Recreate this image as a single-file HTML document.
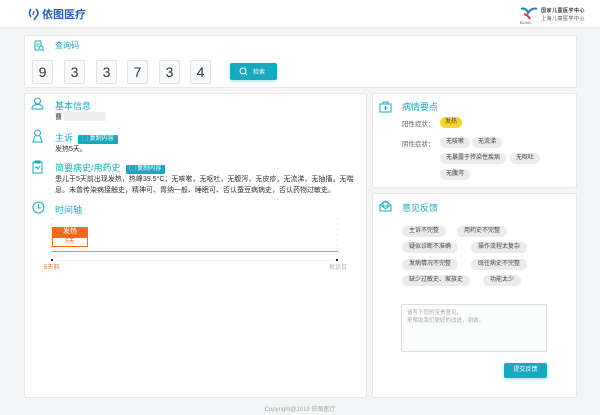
<!DOCTYPE html>
<html><head><meta charset="utf-8"><style>
*{margin:0;padding:0;box-sizing:border-box}
body{width:600px;height:415px;background:#f4f5f6;font-family:"Liberation Sans","Noto Sans CJK SC",sans-serif;position:relative;overflow:hidden;color:#333}
.a{position:absolute}
.card{position:absolute;background:#fff;border:1px solid #e6e8ea;border-radius:2px}
.t{color:#1aabbd;font-size:9px}
.s{font-size:7px;color:#333}
.tag{position:absolute;background:#e9ebed;border-radius:8px;font-size:6px;color:#444;height:11px;line-height:11px;padding:0 6px}
.d{position:absolute;top:60px;width:21px;height:24px;border:1px solid #e2e4e6;background:#f8f9fa;border-radius:2px;font-size:14px;line-height:23px;text-align:center;color:#333}
.cp{display:inline-block;background:#17a9bd;color:#fff;font-size:6px;height:9px;line-height:9px;padding:0 4px;border-radius:1px;vertical-align:1px;margin-left:5px}
svg{position:absolute}
</style></head><body>
<div class="a" style="left:0;top:0;width:600px;height:28px;background:#fff;border-bottom:1px solid #e8e8e8"></div>
<svg style="left:28px;top:7px" width="12" height="14" viewBox="0 0 12 14"><path d="M3 2 Q0 6 3 10 M8 2 Q12 6 8 10 L6 13" stroke="#2a5fb5" stroke-width="1.6" fill="none"/><path d="M6 4 L5 8" stroke="#2a5fb5" stroke-width="1.4"/></svg>
<div class="a" style="left:42px;top:6px;font-size:11px;color:#2a5fb5;font-weight:bold">依图医疗</div>
<svg style="left:518px;top:5px" width="22" height="20" viewBox="0 0 22 20"><path d="M3 4 Q8 2 10 8 Q14 2 19 4" stroke="#2a7ab8" stroke-width="2" fill="none"/><path d="M6 9 Q10 10 12 14" stroke="#e03060" stroke-width="2" fill="none"/><text x="2" y="19" font-size="4" fill="#2a5fb5">BCMC</text></svg>
<div class="a" style="left:541px;top:7px;font-size:5px;color:#333;font-weight:bold;letter-spacing:0.5px">国家儿童医学中心</div>
<div class="a" style="left:541px;top:15px;font-size:5px;color:#555;letter-spacing:0.5px">上海儿童医学中心</div>

<div class="card" style="left:24px;top:35px;width:553px;height:53px"></div>
<svg style="left:33px;top:40px" width="12" height="12" viewBox="0 0 12 12"><path d="M2 1h6v5M2 1v9h4M3.5 4h3M3.5 6h2" stroke="#1aabbd" fill="none"/><circle cx="8" cy="8" r="2" stroke="#1aabbd" fill="none"/><path d="M9.5 9.5l1.5 1.5" stroke="#1aabbd"/></svg>
<div class="a t" style="left:55px;top:40px;font-size:8px">查询码</div>
<div class="d" style="left:32px">9</div><div class="d" style="left:64px">3</div><div class="d" style="left:96px">3</div><div class="d" style="left:127px">7</div><div class="d" style="left:159px">3</div><div class="d" style="left:190px">4</div>
<div class="a" style="left:230px;top:63px;width:47px;height:17px;background:#17a9bd;border-radius:2px;box-shadow:0 1px 3px rgba(23,169,189,.4)"></div>
<svg style="left:239px;top:67px" width="9" height="9" viewBox="0 0 9 9"><circle cx="4" cy="4" r="3" stroke="#fff" fill="none"/><path d="M6 6l2 2" stroke="#fff"/></svg>
<div class="a" style="left:253px;top:67px;font-size:6px;color:#fff">检索</div>

<div class="card" style="left:24px;top:93px;width:343px;height:305px"></div>
<svg style="left:31px;top:97px" width="13" height="13" viewBox="0 0 13 13"><circle cx="6.5" cy="4" r="3" stroke="#1aabbd" fill="none"/><path d="M1 12 Q1 7.5 6.5 7.5 Q12 7.5 12 12Z" stroke="#1aabbd" fill="none"/></svg>
<div class="a t" style="left:55px;top:99px">基本信息</div>
<div class="a s" style="left:55px;top:112px">曹</div>
<div class="a" style="left:64px;top:112px;width:42px;height:9px;background:#eeeff0"></div>
<svg style="left:31px;top:129px" width="13" height="14" viewBox="0 0 13 14"><circle cx="6.5" cy="4" r="3" stroke="#1aabbd" fill="none"/><path d="M4 7 L2 13 H11 L9 7" stroke="#1aabbd" fill="none"/></svg>
<div class="a t" style="left:55px;top:131px">主诉<span class="cp">▢ 复制内容</span></div>
<div class="a s" style="left:55px;top:144px">发热5天。</div>
<svg style="left:32px;top:160px" width="11" height="14" viewBox="0 0 11 14"><rect x="1" y="2" width="9" height="11" stroke="#1aabbd" fill="none"/><path d="M3 1h5v2H3zM3 8l2-1 1 2 2-3" stroke="#1aabbd" fill="none"/></svg>
<div class="a t" style="left:55px;top:161px">简要病史/用药史<span class="cp">▢ 复制内容</span></div>
<div class="a s" style="left:55px;top:174px;width:305px;line-height:11px">患儿于5天前出现发热，热峰39.5°C；无咳嗽，无呕吐，无腹泻，无皮疹，无流涕，无抽搐，无喘息。未曾传染病接触史，精神可、胃纳一般、睡眠可、否认蚕豆病病史，否认药物过敏史。</div>
<svg style="left:32px;top:201px" width="13" height="13" viewBox="0 0 13 13"><circle cx="6.5" cy="6.5" r="5.5" stroke="#1aabbd" fill="none"/><path d="M6.5 3v4h3" stroke="#1aabbd" fill="none"/></svg>
<div class="a t" style="left:55px;top:203px">时间轴</div>
<div class="a" style="left:51px;top:217px;border-left:1px dashed #eee;height:40px"></div>
<div class="a" style="left:337px;top:217px;border-left:1px dashed #eee;height:40px"></div>
<div class="a" style="left:52px;top:227px;width:36px;height:10px;background:#f26a1b;color:#fff;font-size:7px;text-align:center;line-height:10px">发热</div>
<div class="a" style="left:52px;top:237px;width:36px;height:10px;border:1px solid #f26a1b;background:#fff;color:#f26a1b;font-size:6px;text-align:center;line-height:8px">5天</div>
<div class="a" style="left:51px;top:251px;width:287px;height:1px;background:#f0894a"></div>
<div class="a" style="left:51px;top:260px;width:287px;height:1px;background:#eee"></div>
<div class="a" style="left:51px;top:259px;width:2px;height:2px;background:#222"></div>
<div class="a" style="left:336px;top:259px;width:2px;height:2px;background:#222"></div>
<div class="a" style="left:44px;top:262px;font-size:6px;color:#f26a1b">5天前</div>
<div class="a" style="left:329px;top:262px;font-size:6px;color:#aaa">就诊日</div>

<div class="card" style="left:372px;top:93px;width:205px;height:95px"></div>
<svg style="left:379px;top:100px" width="13" height="13" viewBox="0 0 13 13"><rect x="1" y="4" width="11" height="8" stroke="#1aabbd" fill="none"/><path d="M4 4V2h5v2M6.5 6v4M4.5 8h4" stroke="#1aabbd" fill="none"/></svg>
<div class="a t" style="left:402px;top:100px">病情要点</div>
<div class="a s" style="left:402px;top:118px;color:#666;font-size:6.5px">阳性症状：</div>
<div class="tag" style="left:440px;top:117px;background:#f7d530;padding:0 5px">发热</div>
<div class="a s" style="left:402px;top:138px;color:#666;font-size:6.5px">阴性症状：</div>
<div class="tag" style="left:440px;top:137px">无咳嗽</div><div class="tag" style="left:472px;top:137px">无流涕</div>
<div class="tag" style="left:440px;top:153px">无暴露于传染性疾病</div><div class="tag" style="left:510px;top:153px">无呕吐</div>
<div class="tag" style="left:440px;top:169px">无腹泻</div>

<div class="card" style="left:372px;top:193px;width:205px;height:205px"></div>
<svg style="left:379px;top:199px" width="13" height="13" viewBox="0 0 13 13"><path d="M1 6l5.5 -4 5.5 4v6H1z M1 6l5.5 3.5L12 6" stroke="#1aabbd" fill="none"/><rect x="4" y="3" width="5" height="4" stroke="#1aabbd" fill="none"/></svg>
<div class="a t" style="left:402px;top:201px">意见反馈</div>
<div class="tag" style="left:402px;top:226px;padding:0 7px">主诉不完整</div><div class="tag" style="left:457px;top:226px;padding:0 7px">用药史不完整</div>
<div class="tag" style="left:402px;top:242px;padding:0 7px">疑似诊断不准确</div><div class="tag" style="left:471px;top:242px;padding:0 7px">操作流程太复杂</div>
<div class="tag" style="left:402px;top:259px;padding:0 7px">发病情况不完整</div><div class="tag" style="left:471px;top:259px;padding:0 7px">既往病史不完整</div>
<div class="tag" style="left:402px;top:275px;padding:0 7px">缺少过敏史、家族史</div><div class="tag" style="left:483px;top:275px;padding:0 7px">功能太少</div>
<div class="a" style="left:401px;top:304px;width:146px;height:48px;border:1px solid #ddd;background:#fafbfb;border-radius:2px;font-size:5.5px;color:#aaa;padding:4px 5px;line-height:8px">请写下您的宝贵意见，<br>来帮助我们更好的改进，谢谢。</div>
<div class="a" style="left:504px;top:363px;width:43px;height:15px;background:#17a9bd;border-radius:2px;color:#fff;font-size:6px;text-align:center;line-height:15px;box-shadow:0 1px 3px rgba(23,169,189,.4)">提交反馈</div>

<div class="a" style="left:0;top:404px;width:600px;text-align:center;font-size:6px;color:#aaa">Copyright@2019 依图医疗</div>
</body></html>
